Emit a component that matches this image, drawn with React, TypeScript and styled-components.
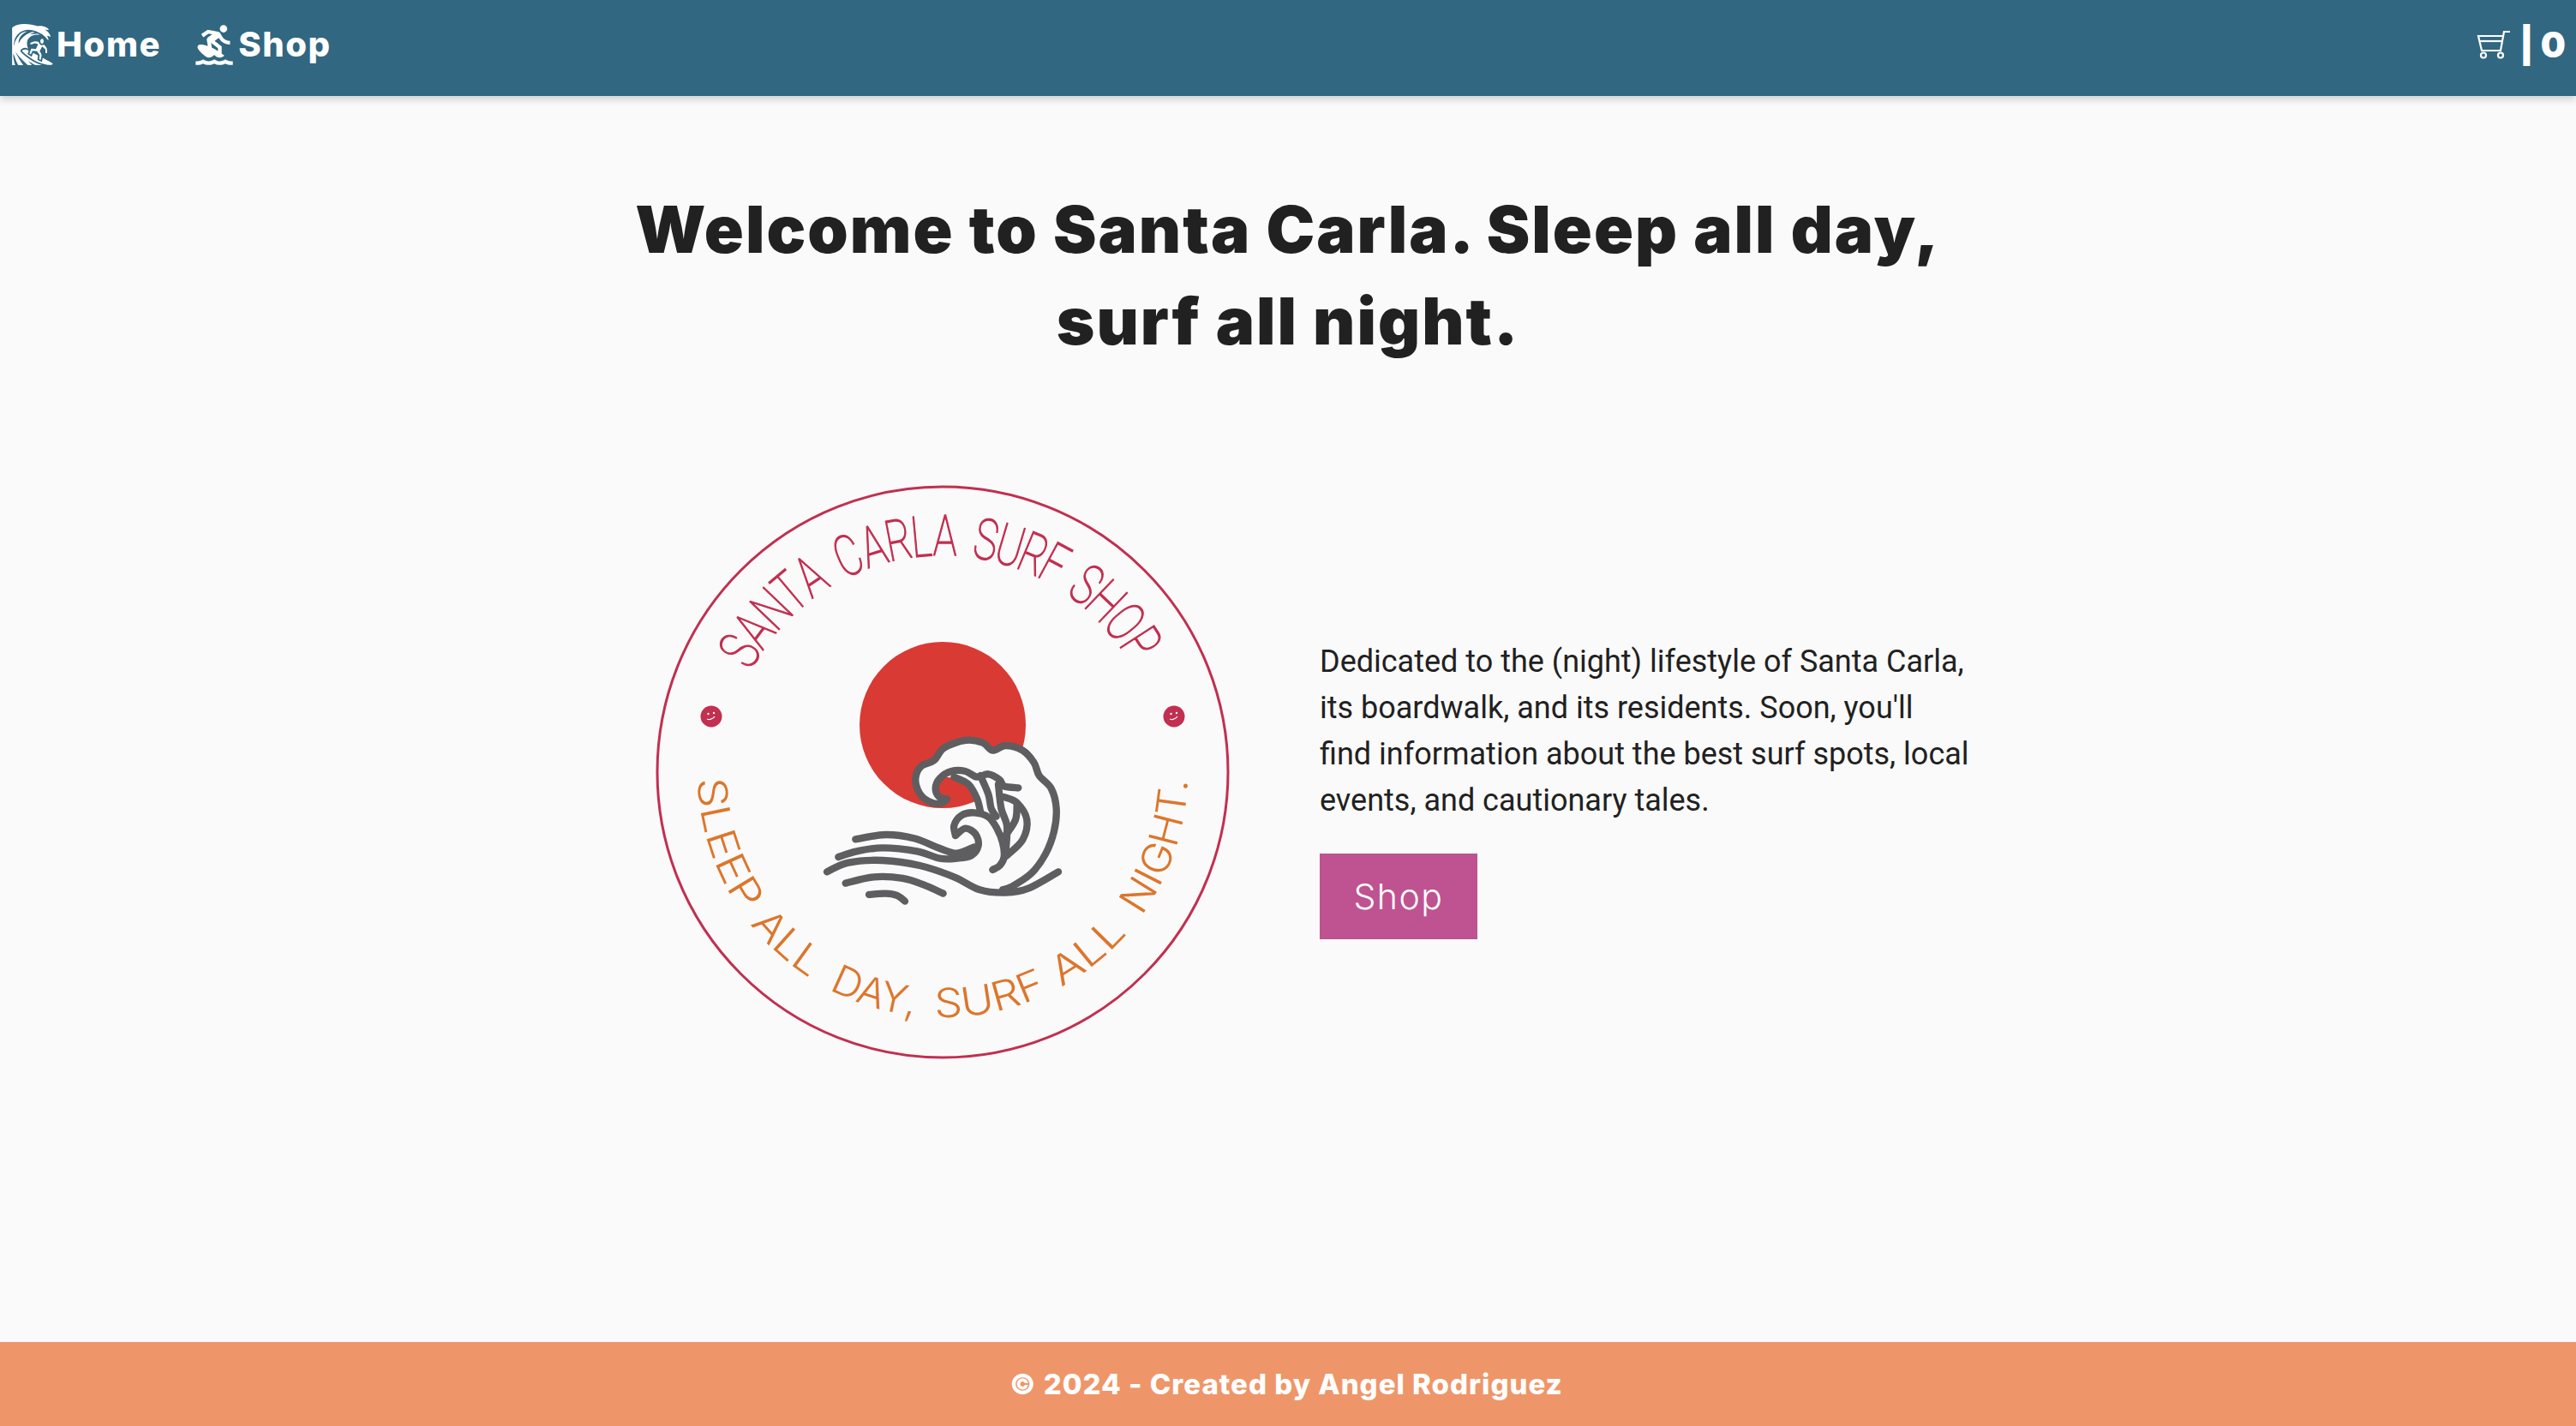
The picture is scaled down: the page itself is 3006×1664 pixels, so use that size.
import React from "react";
import styled, { createGlobalStyle } from "styled-components";
import { GiWaveSurfer } from "react-icons/gi";
import { MdSurfing } from "react-icons/md";

const GlobalStyle = createGlobalStyle`
  html, body { margin: 0; padding: 0; height: 100%; background: #fafafa; }
  body { font-family: "Roboto", "Liberation Sans", sans-serif; color: #212121; overflow: hidden; }
  #root { height: 100%; }
`;

const Page = styled.div`
  height: 1664px;
  display: flex;
  flex-direction: column;
`;
const Header = styled.header`
  height: 112px;
  flex: none;
  background: #316781;
  box-shadow: 0 3px 10px rgba(0, 0, 0, 0.2);
  display: flex;
  align-items: flex-start;
  justify-content: space-between;
  padding: 0 12px 0 12px;
  color: #fff;
  position: relative;
`;
const Nav = styled.nav`
  display: flex;
  align-items: center;
  gap: 36px;
  height: 103px;
`;
const NavLink = styled.a`
  display: flex;
  align-items: center;
  gap: 2px;
  color: #fff;
  font-family: "Inter", "Liberation Sans", sans-serif;
  font-weight: 800;
  font-size: 40px;
  letter-spacing: 1.6px;
  text-decoration: none;
`;
const CartArea = styled.div`
  display: flex;
  align-items: center;
  gap: 10px;
  height: 103px;
  font-family: "Inter", "Liberation Sans", sans-serif;
  font-weight: 900;
  font-size: 41px;
`;
const Main = styled.main`
  flex: 1;
  display: flex;
  flex-direction: column;
  align-items: center;
  padding-top: 102px;
`;
const Title = styled.h1`
  margin: 0;
  width: 1600px;
  text-align: center;
  font-family: "Inter", "Liberation Sans", sans-serif;
  font-weight: 900;
  font-size: 76px;
  letter-spacing: 2px;
  line-height: 107px;
  color: #212121;
`;
const Hero = styled.section`
  margin-top: 122px;
  width: 1520px;
  padding-left: 7px;
  box-sizing: border-box;
  display: flex;
  gap: 90px;
`;
const Logo = styled.svg`
  width: 700px;
  height: 700px;
  flex: none;
`;
const Copy = styled.div`
  flex: none;
  width: 760px;
  padding-top: 195px;
`;
const Paragraph = styled.p`
  margin: 0 0 35px;
  font-size: 36px;
  line-height: 54px;
  color: #212121;
`;
const ShopButton = styled.a`
  display: inline-flex;
  align-items: center;
  justify-content: center;
  width: 184px;
  height: 100px;
  background: #bf5290;
  color: #fff;
  font-family: "Inter", "Liberation Sans", sans-serif;
  font-weight: 300;
  font-size: 41px;
  letter-spacing: 1.5px;
`;
const Footer = styled.footer`
  height: 98px;
  flex: none;
  background: #ee9669;
  color: #fff;
  display: flex;
  align-items: center;
  justify-content: center;
  padding-right: 4px;
  font-family: "Inter", "Liberation Sans", sans-serif;
  font-weight: 800;
  font-size: 33px;
  letter-spacing: 1px;
`;

type P = [number, number];
const smooth = (pts: P[], closed = false): string => {
  const at = (i: number) => pts[closed ? (i + pts.length) % pts.length : Math.max(0, Math.min(pts.length - 1, i))];
  let d = `M${pts[0][0]},${pts[0][1]}`;
  const n = closed ? pts.length : pts.length - 1;
  for (let i = 0; i < n; i++) {
    const [p0, p1, p2, p3] = [at(i - 1), at(i), at(i + 1), at(i + 2)];
    d += ` C${(p1[0] + (p2[0] - p0[0]) / 6).toFixed(1)},${(p1[1] + (p2[1] - p0[1]) / 6).toFixed(1)} ${(p2[0] - (p3[0] - p1[0]) / 6).toFixed(1)},${(p2[1] - (p3[1] - p1[1]) / 6).toFixed(1)} ${p2[0]},${p2[1]}`;
  }
  return d + (closed ? " Z" : "");
};

const outer: P[] = [[495,608],[470,624],[430,615],[398,585],[385,535],[405,492],[450,472],[485,428],[560,402],[620,410],[655,437],[700,420],[760,437],[800,480],[818,525],[860,570],[878,640],[870,720],[840,800],[790,868],[720,915],[690,925]];
const fillShape: P[] = [...outer,[610,880],[590,805],[530,735],[520,700],[545,665],[590,655],[610,650],[600,610],[570,560],[520,535],[475,535],[455,570],[470,600]];
const strokes: P[][] = [
  outer,
  [[495,608],[468,600],[455,570],[470,535],[510,510],[560,510],[600,530],[640,520],[680,540],[695,562],[745,568]],
  [[520,530],[570,555],[600,605],[612,650]],
  [[612,525],[640,590],[650,640],[668,668]],
  [[675,555],[685,640],[705,700],[702,780],[700,808]],
  [[695,600],[740,620],[775,680],[760,750],[705,805]],
  [[740,630],[735,680],[700,735]],
  [[525,735],[520,700],[545,665],[590,655],[640,670],[670,710],[690,760],[695,810],[680,840],[655,855]],
  [[525,735],[560,710],[595,730],[605,770],[580,805],[530,815],[470,815],[390,790],[270,778],[180,790],[115,810]],
  [[175,748],[280,732],[380,745],[470,780],[530,797],[590,775]],
  [[75,862],[150,830],[270,822],[400,840],[520,880],[610,925],[700,935],[780,920],[885,862]],
  [[140,902],[240,880],[340,885],[420,910],[482,938]],
  [[222,942],[280,938],[320,945],[348,965]],
];

const Dot = ({ x, y }: { x: number; y: number }) => (
  <g transform={`translate(${x} ${y})`}>
    <circle r="12.5" fill="#c22f50" />
    <circle cx="-3.5" cy="-3" r="1.2" fill="#fff" />
    <circle cx="3" cy="-4" r="1.2" fill="#fff" />
    <path d="M-5 3 Q0 5 4 0" fill="none" stroke="#fff" strokeWidth="1.2" />
  </g>
);

const ADV: Record<string, number> = { S: 27, A: 31, N: 31, T: 27, C: 30, R: 28, L: 24, U: 29, F: 24, H: 31, O: 33, P: 28, " ": 18 };
const TOP = "SANTA CARLA SURF SHOP";
const topTotal = TOP.split("").reduce((a, c) => a + ADV[c], 0);
const START = -62;
const SWEEP = 122;
const topGlyphs = (() => {
  let run = 0;
  return TOP.split("").map((c) => {
    const mid = run + ADV[c] / 2;
    run += ADV[c];
    return { c, angle: START + (SWEEP * mid) / topTotal };
  });
})();

const bottomWords = [
  { word: "SLEEP", offset: 0, length: 166 },
  { word: "ALL", offset: 183, length: 94 },
  { word: "DAY,", offset: 303, length: 105 },
  { word: "SURF", offset: 432, length: 135 },
  { word: "ALL", offset: 585, length: 100 },
  { word: "NIGHT.", offset: 711, length: 170 },
];

const LogoMark = () => (
  <Logo viewBox="0 0 700 700" role="img" aria-label="Santa Carla Surf Shop logo">
    <defs>
      <path id="bottomArc" d="M64.112,359 A286,286 0 0 0 635.888,359" />
    </defs>
    <circle cx="350" cy="351" r="333" fill="none" stroke="#c22f50" strokeWidth="3" />
    <circle cx="350" cy="296" r="97" fill="#d93a34" />
    <g transform="translate(190 180) scale(0.3333)">
      <path d={smooth(fillShape, true)} fill="#fafafa" />
      {strokes.map((s, i) => (
        <path key={i} d={smooth(s)} fill="none" stroke="#5e5e60" strokeWidth="25" strokeLinecap="round" strokeLinejoin="round" />
      ))}
    </g>
    <Dot x={80} y={286} />
    <Dot x={620} y={286} />
    <g fontFamily="Roboto, sans-serif" fontWeight="100" fontSize="66" fill="#c22f50" stroke="#c22f50" strokeWidth="1.5" textAnchor="middle">
      {topGlyphs.map((g, i) => (
        <text key={i} transform={`translate(350 351) rotate(${g.angle.toFixed(2)}) translate(0 -253) scale(0.7 1)`}>{g.c}</text>
      ))}
    </g>
    <g fontFamily="Inter, sans-serif" fontWeight="300" fontSize="47" fill="#dc762c">
      {bottomWords.map((w, i) => (
        <text key={i}>
          <textPath href="#bottomArc" startOffset={w.offset} textLength={w.length} lengthAdjust="spacingAndGlyphs">{w.word}</textPath>
        </text>
      ))}
    </g>
  </Logo>
);

const CartIcon = () => (
  <svg width="40" height="34" viewBox="0 0 40 34" fill="none" stroke="#fff" strokeWidth="2.2">
    <path d="M39 2 H32 L28 24 H6 L2 7 H31" />
    <path d="M3 13 H30" />
    <circle cx="8" cy="29.5" r="3" />
    <circle cx="28" cy="29.5" r="3" />
  </svg>
);

export default function App() {
  return (
    <Page>
      <GlobalStyle />
      <Header>
        <Nav>
          <NavLink><GiWaveSurfer size={52} />Home</NavLink>
          <NavLink><MdSurfing size={52} />Shop</NavLink>
        </Nav>
        <CartArea>
          <CartIcon />
          <span>| 0</span>
        </CartArea>
      </Header>
      <Main>
        <Title>Welcome to Santa Carla. Sleep all day,<br />surf all night.</Title>
        <Hero>
          <LogoMark />
          <Copy>
            <Paragraph>
              Dedicated to the (night) lifestyle of Santa Carla, its boardwalk, and its residents. Soon, you'll find information about the best surf spots, local events, and cautionary tales.
            </Paragraph>
            <ShopButton>Shop</ShopButton>
          </Copy>
        </Hero>
      </Main>
      <Footer>© 2024 - Created by Angel Rodriguez</Footer>
    </Page>
  );
}
